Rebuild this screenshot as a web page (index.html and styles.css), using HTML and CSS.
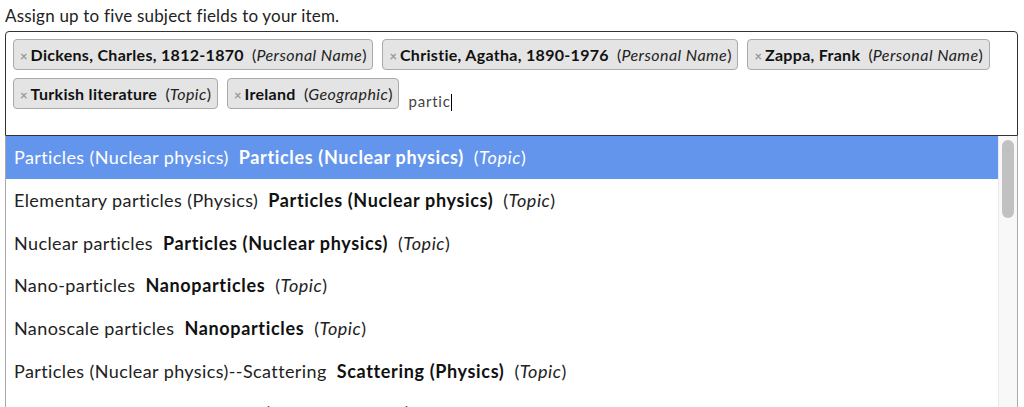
FILE: index.html
```html
<!DOCTYPE html>
<html lang="en">
<head>
<meta charset="utf-8">
<title>Subject fields</title>
<link rel="stylesheet" href="styles.css">
</head>
<body>
<div class="page">
  <p class="label">Assign up to five subject fields to your item.</p>
  <div class="field">
    <ul class="tags">
      <li class="tag"><span class="remove">×</span><b>Dickens, Charles, 1812-1870</b>&nbsp; (<i>Personal Name</i>)</li>
      <li class="tag"><span class="remove">×</span><b>Christie, Agatha, 1890-1976</b>&nbsp; (<i>Personal Name</i>)</li>
      <li class="tag"><span class="remove">×</span><b>Zappa, Frank</b>&nbsp; (<i>Personal Name</i>)</li>
      <li class="tag"><span class="remove">×</span><b>Turkish literature</b>&nbsp; (<i>Topic</i>)</li>
      <li class="tag"><span class="remove">×</span><b>Ireland</b>&nbsp; (<i>Geographic</i>)</li>
      <li class="search">partic<span class="caret"></span></li>
    </ul>
  </div>
  <div class="dropdown">
    <ul class="options">
      <li class="option active">Particles (Nuclear physics)&nbsp; <b>Particles (Nuclear physics)</b>&nbsp; (<i>Topic</i>)</li>
      <li class="option">Elementary particles (Physics)&nbsp; <b>Particles (Nuclear physics)</b>&nbsp; (<i>Topic</i>)</li>
      <li class="option">Nuclear particles&nbsp; <b>Particles (Nuclear physics)</b>&nbsp; (<i>Topic</i>)</li>
      <li class="option">Nano-particles&nbsp; <b>Nanoparticles</b>&nbsp; (<i>Topic</i>)</li>
      <li class="option">Nanoscale particles&nbsp; <b>Nanoparticles</b>&nbsp; (<i>Topic</i>)</li>
      <li class="option">Particles (Nuclear physics)--Scattering&nbsp; <b>Scattering (Physics)</b>&nbsp; (<i>Topic</i>)</li>
      <li class="option">Subatomic particles&nbsp; <b>Particles (Nuclear physics)</b>&nbsp; (<i>Topic</i>)</li>
    </ul>
    <div class="scrollbar"><div class="thumb"></div></div>
  </div>
</div>
</body>
</html>
```
FILE: styles.css
```css
html, body {
  margin: 0;
  padding: 0;
  background: #fff;
  overflow: hidden;
}
body {
  font-family: "Lato", "Liberation Sans", sans-serif;
  color: #222;
  font-size: 16px;
}
.page {
  padding: 6px 6px 0 5px;
}
.label {
  margin: 0 0 5px 0;
  font-size: 17px;
  letter-spacing: 0.2px;
  line-height: 20px;
  color: #222;
}
.field {
  border: 1px solid #333;
  border-radius: 4px 4px 0 0;
  padding: 7px 7px 24px 7px;
}
.tags {
  list-style: none;
  margin: 0;
  padding: 0;
  display: flex;
  flex-wrap: wrap;
  column-gap: 9px;
  row-gap: 8px;
  align-items: flex-start;
}
.tag {
  background: #e4e4e4;
  border: 1px solid #aaa;
  border-radius: 4px;
  padding: 0 6px;
  height: 29px;
  line-height: 29px;
  font-size: 16px;
  color: #222;
  white-space: nowrap;
}
.tag b {
  color: #111;
  letter-spacing: 0.3px;
}
.tag i {
  letter-spacing: 0.45px;
}
.remove {
  color: #999;
  font-weight: bold;
  font-size: 13px;
  margin-right: 3px;
}
.search {
  font-size: 15px;
  letter-spacing: 0.8px;
  color: #444;
  padding: 14px 0 0 0;
  line-height: 19px;
}
.caret {
  display: inline-block;
  width: 1px;
  height: 17px;
  background: #000;
  vertical-align: -4px;
}
.dropdown {
  display: flex;
  border: 1px solid #aaa;
  border-top: none;
  border-radius: 0 0 4px 4px;
  height: 300px;
}
.options {
  list-style: none;
  margin: 0;
  padding: 0;
  flex: 1;
}
.option {
  padding: 0 8px;
  height: 42.8px;
  line-height: 42.8px;
  font-size: 18px;
  letter-spacing: 0.4px;
  color: #222;
  white-space: nowrap;
}
.option b {
  letter-spacing: 0.65px;
  color: #111;
}
.option i {
  letter-spacing: 0.55px;
}
.option.active {
  background: #6495ed;
  color: #fff;
}
.option.active b {
  color: #fff;
}
.scrollbar {
  width: 18px;
  background: #f8f8f8;
  border-left: 1px solid #e8e8e8;
}
.thumb {
  margin: 4px 3px 0 3px;
  height: 78px;
  border-radius: 6px;
  background: #c1c1c1;
}
```
